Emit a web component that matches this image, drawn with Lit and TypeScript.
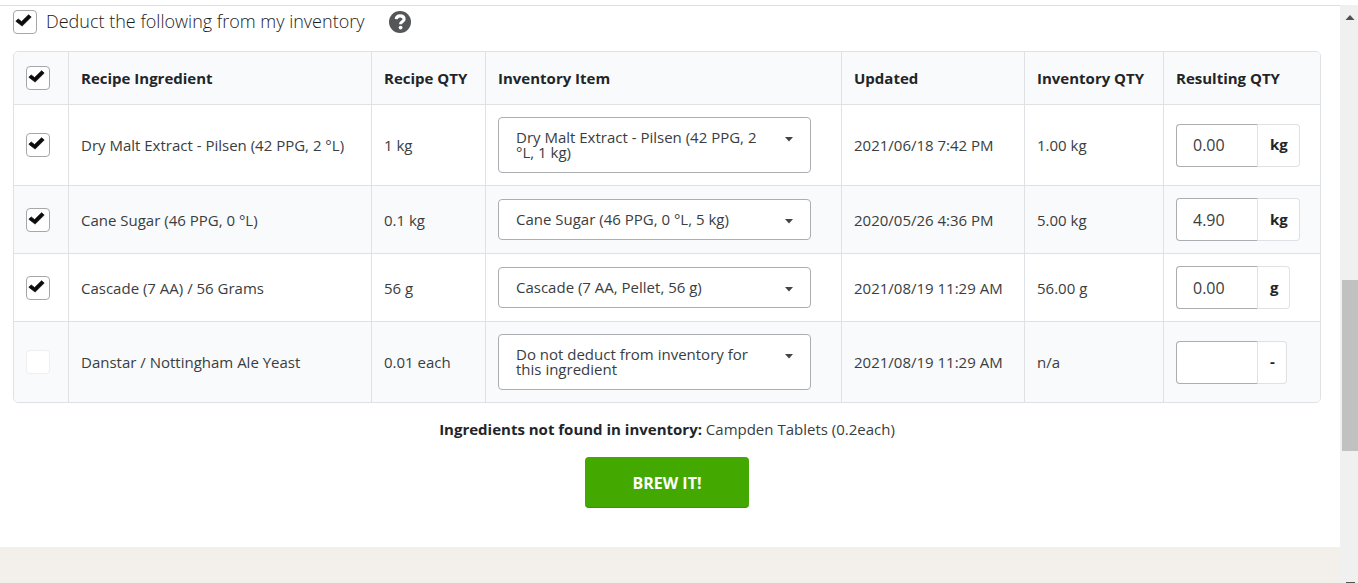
import { LitElement, html, css } from "lit";
import { customElement, property, state } from "lit/decorators.js";

interface Row {
  name: string;
  recipeQty: string;
  item: string;
  updated: string;
  inventoryQty: string;
  result: string;
  unit: string;
  deduct: boolean;
}

const ROWS: Row[] = [
  { name: "Dry Malt Extract - Pilsen (42 PPG, 2 °L)", recipeQty: "1 kg", item: "Dry Malt Extract - Pilsen (42 PPG, 2 °L, 1 kg)", updated: "2021/06/18 7:42 PM", inventoryQty: "1.00 kg", result: "0.00", unit: "kg", deduct: true },
  { name: "Cane Sugar (46 PPG, 0 °L)", recipeQty: "0.1 kg", item: "Cane Sugar (46 PPG, 0 °L, 5 kg)", updated: "2020/05/26 4:36 PM", inventoryQty: "5.00 kg", result: "4.90", unit: "kg", deduct: true },
  { name: "Cascade (7 AA) / 56 Grams", recipeQty: "56 g", item: "Cascade (7 AA, Pellet, 56 g)", updated: "2021/08/19 11:29 AM", inventoryQty: "56.00 g", result: "0.00", unit: "g", deduct: true },
  { name: "Danstar / Nottingham Ale Yeast", recipeQty: "0.01 each", item: "Do not deduct from inventory for this ingredient", updated: "2021/08/19 11:29 AM", inventoryQty: "n/a", result: "", unit: "-", deduct: false },
];

@customElement("tick-box")
class TickBox extends LitElement {
  @property({ type: Boolean }) checked = false;
  @property({ type: Boolean }) disabled = false;
  @property() label = "";
  @property() text = "";

  static styles = css`
    :host { display: block; }
    .label { display: flex; align-items: center; gap: 9px; }
    .box { display: grid; width: 24px; height: 24px; flex: none; }
    .input {
      grid-area: 1 / 1; appearance: none; margin: 0; width: 24px; height: 24px;
      border: 1px solid #a5a7aa; border-radius: 4px; background: #fff;
    }
    .input:disabled { border-color: #efeff2; }
    .mark { grid-area: 1 / 1; width: 24px; height: 24px; pointer-events: none; }
    .text { font-size: 18px; font-weight: 300; line-height: 22px; padding-bottom: 2px; color: #1c1c1d; }
  `;

  render() {
    return html`<label class="label">
      <span class="box">
        <input class="input" type="checkbox" aria-label=${this.text || this.label} .checked=${this.checked} ?disabled=${this.disabled}
          @change=${(e: Event) => (this.checked = (e.target as HTMLInputElement).checked)} />
        ${this.checked
          ? html`<svg class="mark" viewBox="0 0 24 24" aria-hidden="true"><path d="M2.8 11.2 5.2 8.900 8.600 11.600 15.600 4.700 18.200 7.100 9.100 16.100Z" fill="#0c0c0d" stroke="#0c0c0d" stroke-width=".7" stroke-linejoin="round" /></svg>`
          : null}
      </span>
      ${this.text ? html`<span class="text">${this.text}</span>` : null}
    </label>`;
  }
}

@customElement("app-root")
class AppRoot extends LitElement {
  @state() private rows = ROWS;

  static styles = css`
    :host {
      display: grid; grid-template-columns: minmax(0, 1fr) 18px; min-height: 100vh;
      font-family: "Open Sans", sans-serif; font-size: 15px; font-weight: 400; line-height: 20px; color: #3a3d41;
      background: #fff;
    }
    .page { display: flex; flex-direction: column; margin-top: 5px; border-top: 1px solid #dededf; }
    .content { padding: 4px 19px 38px 13px; flex: 1; }
    .head { display: flex; align-items: center; gap: 25px; margin-bottom: 17px; }
    .help { width: 22px; height: 22px; padding: 0; border: 0; background: none; display: block; }
    .help-icon { display: block; width: 22px; height: 22px; }

    .table {
      width: 100%; table-layout: fixed; border-collapse: separate; border-spacing: 0;
      border: 1px solid #dfe1e4; border-radius: 5px; overflow: hidden;
    }
    .c-check { width: 55px; }
    .c-qty { width: 114px; }
    .c-item { width: 356px; }
    .c-date { width: 183px; }
    .c-inv { width: 139px; }
    .c-res { width: 156px; }
    .th, .td { padding: 12px; text-align: left; vertical-align: middle; border-right: 1px solid #dfe1e4; }
    .th:last-child, .td:last-child { border-right: 0; }
    .th { font-weight: 700; height: 28px; background: #f9fafb; color: #212529; }
    .td { border-top: 1px solid #dfe1e4; }
    .row:nth-child(even) { background: #f9fafc; }

    .picker { display: grid; width: 313px; max-width: 100%; }
    .select {
      grid-area: 1 / 1; appearance: none; box-sizing: border-box; width: 100%; height: 100%; margin: 0;
      padding: 0 50px 0 17px; border: 1px solid #abadb0; border-radius: 4px; font: inherit; color: transparent;
      background: #fff url("data:image/svg+xml,%3Csvg xmlns='http://www.w3.org/2000/svg' width='8' height='5'%3E%3Cpath d='M0 0h8L4 4.5z' fill='%23444'/%3E%3C/svg%3E") no-repeat right 17px top 19px;
    }
    .option { color: #212529; }
    .value { grid-area: 1 / 1; padding: 13px 51px 13px 18px; line-height: 15px; pointer-events: none; }
    .group { display: flex; height: 43px; }
    .num {
      box-sizing: border-box; width: 82px; margin: 0; padding: 0 16px; border: 1px solid #abadb0; border-right-color: #dfe1e4;
      border-radius: 4px 0 0 4px; font: inherit; font-size: 16px; color: inherit; background: #fff;
    }
    .unit {
      display: flex; align-items: center; padding: 0 11px 2px 12px; font-weight: 700; color: #212529; background: #fff;
      border: 1px solid #dfe1e4; border-left: 0; border-radius: 0 4px 4px 0;
    }

    .missing { margin: 16px 0 18px; text-align: center; }
    .strong { font-weight: 700; color: #212529; }
    .brew {
      display: block; margin: 0 auto; padding: 16px 47px 14px; border: 0; border-bottom: 1px solid #3c9400; border-radius: 4px;
      background: #43a800; color: #fff; font: inherit; font-size: 16px; font-weight: 700; line-height: 20px;
    }
    .footer { height: 36px; background: #f3efea; }

    .bar { display: flex; flex-direction: column; margin-top: 5px; padding-left: 2px; background: #f0f0f0; height: calc(100vh - 5px); }
    .arrow { display: block; width: 16px; height: 17px; flex: none; }
    .above { flex: 258; }
    .thumb { flex: 171; background: #c1c1c1; }
    .below { flex: 131; }
    .arrow-end { width: 9px; height: 1px; margin-left: 4px; background: #505050; }
  `;

  private pick(row: Row, e: Event) {
    const item = (e.target as HTMLSelectElement).value;
    this.rows = this.rows.map((r) => (r === row ? { ...r, item } : r));
  }

  render() {
    return html`
      <div class="page">
        <main class="content">
          <div class="head">
            <tick-box checked text="Deduct the following from my inventory"></tick-box>
            <button class="help" type="button" aria-label="Help">
              <svg class="help-icon" viewBox="0 0 22 22" aria-hidden="true">
                <circle cx="11" cy="11" r="11" fill="#555657" />
                <path d="M7.200 8.100C7.500 5.900 9 4.900 11.100 4.900c2.300 0 4 1.300 4 3.300 0 2.500-3.400 2.600-3.400 4.400v.6" fill="none" stroke="#fff" stroke-width="3.100" />
                <circle cx="11.600" cy="16.600" r="1.900" fill="#fff" />
              </svg>
            </button>
          </div>

          <table class="table">
            <colgroup>
              <col class="c-check" /><col /><col class="c-qty" /><col class="c-item" />
              <col class="c-date" /><col class="c-inv" /><col class="c-res" />
            </colgroup>
            <thead>
              <tr>
                <th class="th"><tick-box checked label="Select all"></tick-box></th>
                <th class="th">Recipe Ingredient</th>
                <th class="th">Recipe QTY</th>
                <th class="th">Inventory Item</th>
                <th class="th">Updated</th>
                <th class="th">Inventory QTY</th>
                <th class="th">Resulting QTY</th>
              </tr>
            </thead>
            <tbody>
              ${this.rows.map(
                (r) => html`<tr class="row">
                  <td class="td"><tick-box ?checked=${r.deduct} ?disabled=${!r.deduct} label=${r.name}></tick-box></td>
                  <td class="td">${r.name}</td>
                  <td class="td">${r.recipeQty}</td>
                  <td class="td">
                    <div class="picker">
                      <select class="select" aria-label="Inventory item for ${r.name}" @change=${(e: Event) => this.pick(r, e)}>
                        <option class="option">${r.item}</option>
                      </select>
                      <span class="value" aria-hidden="true">${r.item}</span>
                    </div>
                  </td>
                  <td class="td">${r.updated}</td>
                  <td class="td">${r.inventoryQty}</td>
                  <td class="td">
                    <div class="group">
                      <input class="num" type="text" aria-label="Resulting quantity of ${r.name}" .value=${r.result} />
                      <span class="unit">${r.unit}</span>
                    </div>
                  </td>
                </tr>`
              )}
            </tbody>
          </table>

          <p class="missing"><span class="strong">Ingredients not found in inventory:</span> Campden Tablets (0.2each)</p>
          <button class="brew" type="button">BREW IT!</button>
        </main>
        <footer class="footer"></footer>
      </div>
      <div class="bar" aria-hidden="true">
        <svg class="arrow" viewBox="0 0 16 17"><path d="M3.500 15 8 10l4.500 5z" fill="#505050" /></svg>
        <div class="above"></div>
        <div class="thumb"></div>
        <div class="below"></div>
        <div class="arrow-end"></div>
      </div>
    `;
  }
}
